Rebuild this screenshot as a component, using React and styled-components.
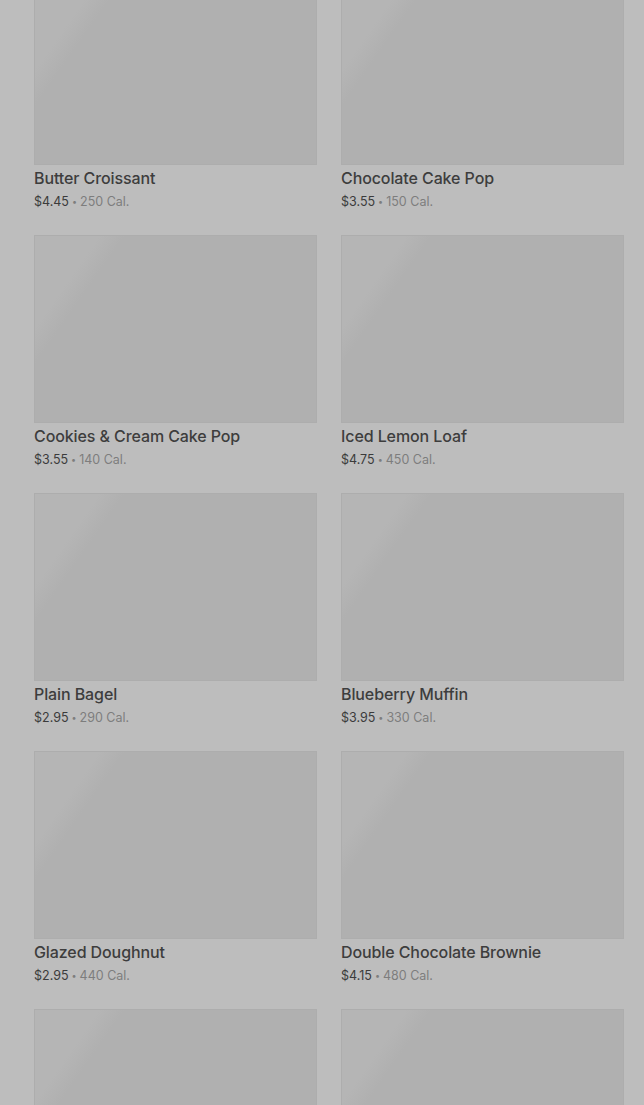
import React from "react";
import styled, { createGlobalStyle } from "styled-components";

const GlobalStyle = createGlobalStyle`
  html, body {
    margin: 0;
    padding: 0;
    background: #bdbdbd;
  }
  body {
    font-family: "Inter", "Roboto", "Liberation Sans", sans-serif;
    overflow: hidden;
  }
`;

const Page = styled.div`
  height: 1105px;
  overflow: hidden;
  background: #bdbdbd;
`;

const Grid = styled.div`
  display: grid;
  grid-template-columns: 283px 283px;
  column-gap: 24px;
  row-gap: 24px;
  padding: 0 20px 0 34px;
  margin-top: -23px;
`;

const Card = styled.div`
  display: flex;
  flex-direction: column;
`;

const Thumb = styled.div`
  height: 188px;
  background: linear-gradient(
    125deg,
    #b5b5b5 0%,
    #b5b5b5 16%,
    #b0b0b0 22%,
    #b0b0b0 100%
  );
  box-shadow: inset 0 0 0 1px #adadad;
`;

const Title = styled.div`
  margin-top: 3px;
  font-size: 16px;
  line-height: 20px;
  font-weight: 500;
  color: #3d3d3d;
  letter-spacing: -0.1px;
`;

const Meta = styled.div`
  margin-top: 5px;
  font-size: 12.5px;
  line-height: 18px;
  color: #7d7d7d;

  & b {
    font-weight: 400;
    color: #3b3b3b;
  }
`;

const Dot = styled.span`
  font-size: 9px;
  margin: 0 3px;
  vertical-align: 1px;
`;

const items = [
  ["Butter Croissant", "$4.45", "250"],
  ["Chocolate Cake Pop", "$3.55", "150"],
  ["Cookies & Cream Cake Pop", "$3.55", "140"],
  ["Iced Lemon Loaf", "$4.75", "450"],
  ["Plain Bagel", "$2.95", "290"],
  ["Blueberry Muffin", "$3.95", "330"],
  ["Glazed Doughnut", "$2.95", "440"],
  ["Double Chocolate Brownie", "$4.15", "480"],
  ["", "", ""],
  ["", "", ""],
];

export default function App() {
  return (
    <Page>
      <GlobalStyle />
      <Grid>
        {items.map(([name, price, cal], i) => (
          <Card key={i}>
            <Thumb />
            {name && <Title>{name}</Title>}
            {name && (
              <Meta>
                <b>{price}</b>
                <Dot>•</Dot>
                {cal} Cal.
              </Meta>
            )}
          </Card>
        ))}
      </Grid>
    </Page>
  );
}
